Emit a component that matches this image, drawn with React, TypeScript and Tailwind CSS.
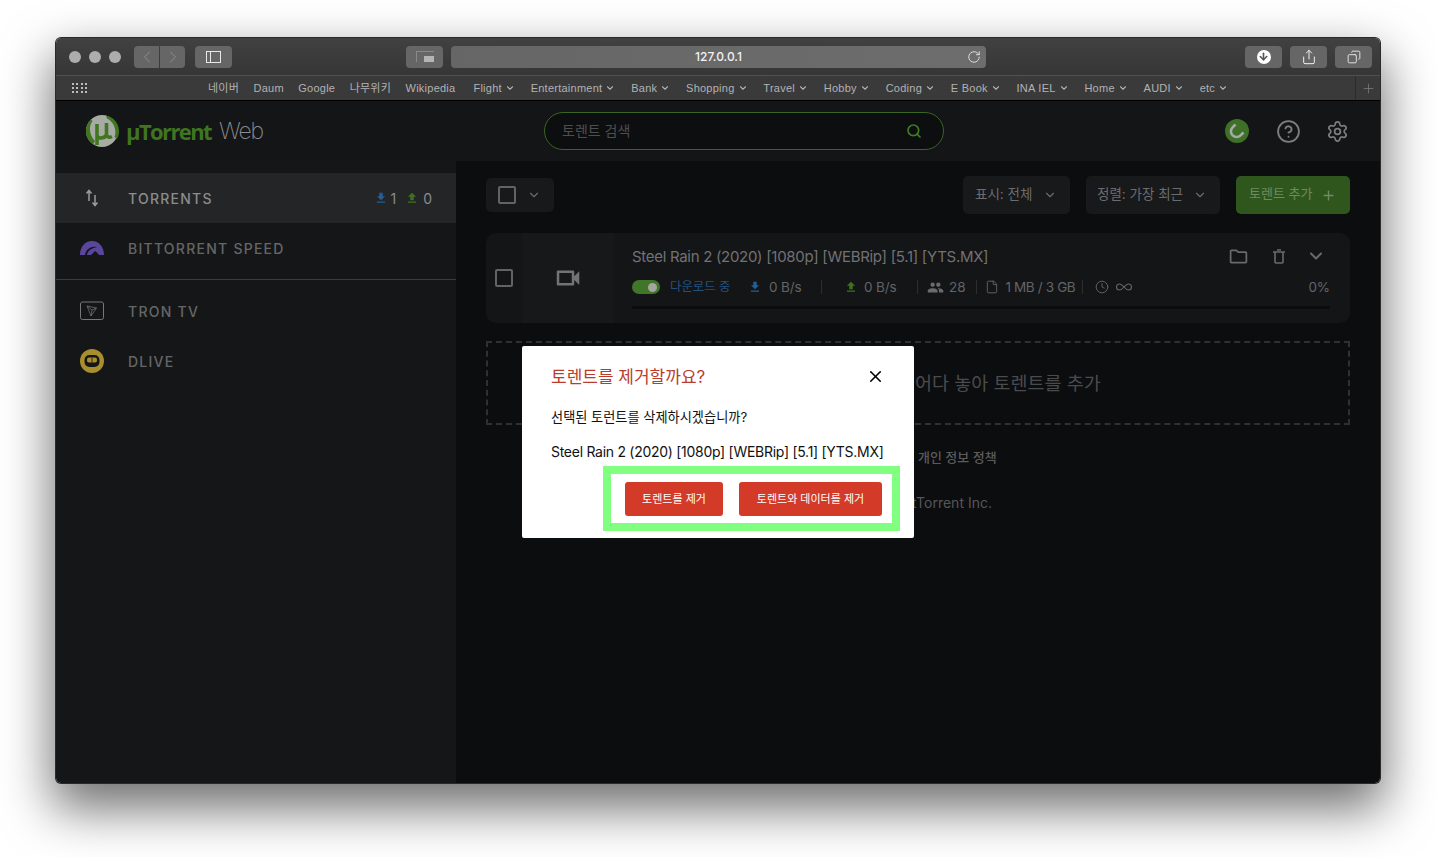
import { ChevronDown, ChevronLeft, ChevronRight, Copy, Plus, RotateCw, Search, Settings, Share, X, Infinity as InfinityIcon, Clock, File, CircleHelp, ArrowDown } from "lucide-react";
import { MdFileDownload, MdFileUpload, MdOutlineFolder, MdOutlineVideocam, MdPeople } from "react-icons/md";

const font = "font-['Inter','Noto_Sans_CJK_KR',sans-serif]";

const links = ["네이버", "Daum", "Google", "나무위키", "Wikipedia"];
const menus = ["Flight", "Entertainment", "Bank", "Shopping", "Travel", "Hobby", "Coding", "E Book", "INA IEL", "Home", "AUDI", "etc"];

function TitleBar() {
  return (
    <div className="flex h-[38px] items-center border-b border-[#505051] bg-gradient-to-b from-[#414142] to-[#363637]">
      <div className="ml-[13px] flex gap-[8px]">
        <span className="size-[12px] rounded-full bg-[#adadad]" />
        <span className="size-[12px] rounded-full bg-[#adadad]" />
        <span className="size-[12px] rounded-full bg-[#adadad]" />
      </div>
      <div className="ml-[13px] flex gap-[1px]">
        <div className="flex h-[22px] w-[25px] items-center justify-center rounded-l-[4px] bg-[#666667] text-[#959595]">
          <ChevronLeft size={20} strokeWidth={1} />
        </div>
        <div className="flex h-[22px] w-[25px] items-center justify-center rounded-r-[4px] bg-[#666667] text-[#959595]">
          <ChevronRight size={20} strokeWidth={1} />
        </div>
      </div>
      <div className="ml-[10px] flex h-[22px] w-[37px] items-center justify-center rounded-[4px] bg-[#666667]">
        <div className="flex h-[12px] w-[15px] border border-[#e8e8e8]">
          <div className="w-[4px] border-r border-[#e8e8e8]" />
        </div>
      </div>
      <div className="ml-[174px] flex h-[22px] w-[37px] items-center justify-center rounded-[4px] bg-[#666667]">
        <div className="flex h-[11px] w-[18px] items-end justify-end border-l border-t border-[#8a8a8a]">
          <div className="h-[6px] w-[10px] bg-[#b4b4b4]" />
        </div>
      </div>
      <div className="relative ml-[8px] flex h-[22px] w-[535px] items-center justify-center rounded-[4px] bg-gradient-to-r from-[#666667] to-[#6d6d6e]">
        <span className={`${font} text-[12px] font-medium text-[#f2f2f2]`}>127.0.0.1</span>
        <RotateCw size={14} strokeWidth={1.5} className="absolute right-[5px] text-[#e8e8e8]" />
      </div>
      <div className="ml-auto mr-[8px] flex gap-[8px]">
        <div className="flex h-[22px] w-[37px] items-center justify-center rounded-[4px] bg-[#666667]">
          <div className="flex size-[14px] items-center justify-center rounded-full bg-white">
            <ArrowDown size={11} strokeWidth={3.5} className="text-[#555]" />
          </div>
        </div>
        <div className="flex h-[22px] w-[37px] items-center justify-center rounded-[4px] bg-[#666667] text-[#f0f0f0]">
          <Share size={16} strokeWidth={1.5} />
        </div>
        <div className="flex h-[22px] w-[37px] items-center justify-center rounded-[4px] bg-[#666667] text-[#f0f0f0]">
          <Copy size={14} strokeWidth={1.5} className="-scale-x-100" />
        </div>
      </div>
    </div>
  );
}

function BookmarksBar() {
  return (
    <div className="flex h-[25px] items-center border-b border-black bg-[#3a3a3b] font-['Liberation_Sans','Noto_Sans_CJK_KR',sans-serif] text-[11px] tracking-[0.25px] text-[#b2b2b2]">
      <div className="ml-[16px] grid w-[15px] grid-cols-4 gap-[2px]">
        {Array.from({ length: 12 }).map((_, i) => (
          <span key={i} className="size-[2px] bg-[#bdbdbd]" />
        ))}
      </div>
      <div className="ml-[121px] flex items-center gap-[14.4px]">
        {links.map((l) => (
          <span key={l}>{l}</span>
        ))}
      </div>
      <div className="ml-[18px] flex items-center gap-[15.8px]">
        {menus.map((m) => (
          <span key={m} className="flex items-center gap-[3px]">
            {m}
            <ChevronDown size={10} strokeWidth={2.6} />
          </span>
        ))}
      </div>
      <div className="ml-auto flex h-full w-[25px] items-center justify-center border-l border-[#2b2b2c] text-[#8c8c8c]">
        <Plus size={15} strokeWidth={1} />
      </div>
    </div>
  );
}

function Logo() {
  return (
    <div className="flex items-center">
      <svg width="34" height="34" viewBox="0 0 34 34">
        <circle cx="17" cy="17" r="16" fill="#a6aba6" />
        <path d="M6 5.5 A16 16 0 0 0 8 30.5 L10 27 C4 21 3.5 12 7.5 7 Z" fill="#41761f" />
        <path d="M21 1.5 A16 16 0 0 1 32 25 L29.5 23 C32 16 29 8 22 4.5 Z" fill="#41761f" />
        <path d="M12 10 V21 C12 25 19 25 21.5 21 M21.5 9 V20 C21.5 23 24 24 27 22.5 M12 20 V31" fill="none" stroke="#41761f" strokeWidth="3.6" />
      </svg>
      <span className="ml-[7px] font-['Open_Sans',sans-serif] text-[22px] font-bold tracking-[-1.6px] text-[#3f7420]">µTorrent</span>
      <span className="ml-[8px] font-['Inter',sans-serif] text-[23px] font-extralight tracking-[-1.2px] text-[#8a8b8c]">Web</span>
    </div>
  );
}

function AppHeader() {
  return (
    <div className="flex h-[60px] items-center bg-[#141517]">
      <div className="ml-[29px] w-[459px]">
        <Logo />
      </div>
      <div className="flex h-[38px] w-[400px] items-center justify-between rounded-full border border-[#3b6423] bg-[#0d0e10] pl-[17px] pr-[21px]">
        <span className={`${font} pb-[2px] text-[14px] text-[#4d4e50]`}>토렌트 검색</span>
        <Search size={16} strokeWidth={2.6} className="text-[#3f7a25]" />
      </div>
      <div className="ml-[281px] flex size-[24px] items-center justify-center rounded-full bg-[#3f7028]">
        <svg width="18" height="18" viewBox="0 0 18 18" fill="none" stroke="#a3aba3" strokeWidth="2.6">
          <path d="M7.5 2.5 L4.6 5.4 A5.6 5.6 0 0 0 12.6 13.4 L15.5 10.5" />
          <path d="M10 5 L13 8" strokeWidth="0" />
        </svg>
      </div>
      <CircleHelp size={25} strokeWidth={1.8} className="ml-[27px] text-[#7c7d7e]" />
      <Settings size={23} strokeWidth={1.8} className="ml-[25px] text-[#7c7d7e]" />
    </div>
  );
}

function SideRow({ icon, label, active, right }: { icon: React.ReactNode; label: string; active?: boolean; right?: React.ReactNode }) {
  return (
    <div className={`flex h-[50px] items-center pr-[24px] ${active ? "bg-[#232527] text-[#8b8c8d]" : "text-[#656667]"}`}>
      <div className="flex w-[72px] justify-center">{icon}</div>
      <span className="font-['Inter',sans-serif] text-[14px] font-medium tracking-[1.25px]">{label}</span>
      {right}
    </div>
  );
}

function Sidebar() {
  return (
    <div className="w-[400px] shrink-0 bg-[#151618] pt-[12px]">
      <SideRow
        active
        label="TORRENTS"
        icon={
          <svg width="14" height="18" viewBox="0 0 14 18" fill="none" stroke="#9a9b9c" strokeWidth="1.5">
            <path d="M4 12 V2 M1.5 4.5 L4 1.5 L6.5 4.5" />
            <path d="M10 6 V16.5 M7.5 13.5 L10 16.5 L12.5 13.5" />
          </svg>
        }
        right={
          <div className="ml-auto flex items-center font-['Inter',sans-serif] text-[14px] text-[#8b8c8d]">
            <MdFileDownload size={14} className="text-[#255e95]" />
            <span className="ml-[2px]">1</span>
            <MdFileUpload size={14} className="ml-[9px] text-[#41701f]" />
            <span className="ml-[4px]">0</span>
          </div>
        }
      />
      <SideRow
        label="BITTORRENT SPEED"
        icon={
          <svg width="24" height="14" viewBox="0 0 24 14">
            <path d="M0 14 C0 6 5 0 12 0 C19 0 24 6 24 14 H19 C18 13 17 11 15 10 L11 14 Z" fill="#5a469c" />
            <path d="M5 14 C6 8 11 5 17 6 C12 7 8 9 7 14 Z" fill="#151618" />
          </svg>
        }
      />
      <div className="mt-[6px] h-px bg-[#3a3b3c]" />
      <div className="mt-[6px]">
        <SideRow
          label="TRON TV"
          icon={
            <svg width="24" height="20" viewBox="0 0 24 20" fill="none" stroke="#77787a" strokeWidth="1">
              <rect x="0.5" y="1" width="23" height="17.5" rx="2" />
              <path d="M7 5 L16.5 7 L11 15 Z M7 5 L12 9 L11 15 M12 9 L16.5 7" strokeWidth="0.7" />
            </svg>
          }
        />
        <SideRow
          label="DLIVE"
          icon={
            <svg width="24" height="24" viewBox="0 0 24 24">
              <circle cx="12" cy="12" r="12" fill="#a88e2d" />
              <rect x="4.5" y="6" width="15" height="12" rx="5" fill="#141517" />
              <rect x="7" y="8.5" width="10" height="5" rx="2" fill="#a88e2d" />
              <rect x="11.6" y="8.5" width="0.8" height="5" fill="#141517" />
            </svg>
          }
        />
      </div>
    </div>
  );
}

function TorrentCard() {
  return (
    <div className="mt-[19px] flex h-[90px] overflow-hidden rounded-[10px] bg-[#141517]">
      <div className="flex w-[36px] items-center justify-center">
        <span className="size-[18px] rounded-[2px] border-2 border-[#626365]" />
      </div>
      <div className="flex w-[92px] items-center justify-center bg-[#17181a]">
        <MdOutlineVideocam size={30} className="text-[#727375]" />
      </div>
      <div className="flex-1 pl-[18px] pr-[20px]">
        <div className="flex h-[45px] items-center justify-between pt-[3px]">
          <span className="text-[15px] tracking-[-0.3px] text-[#717274]">Steel Rain 2 (2020) [1080p] [WEBRip] [5.1] [YTS.MX]</span>
          <div className="mb-[2px] mr-[4px] flex items-center text-[#696a6c]">
            <MdOutlineFolder size={21} />
            <svg width="12" height="15" viewBox="0 0 12 15" fill="none" stroke="currentColor" strokeWidth="1.6" className="ml-[24px]">
              <path d="M0 3 H12 M4 1 H8 M2 3 V13 Q2 14 3 14 H9 Q10 14 10 13 V3" />
            </svg>
            <ChevronDown size={20} strokeWidth={2.4} className="ml-[21px]" />
          </div>
        </div>
        <div className="flex h-[18px] items-center text-[13.5px] tracking-[-0.1px] text-[#636466]">
          <div className="flex h-[14px] w-[28px] items-center justify-end rounded-full bg-[#41752a] pr-[3px]">
            <span className="size-[9px] rounded-full bg-[#a3a5a3]" />
          </div>
          <span className="ml-[10px] w-[59px] whitespace-nowrap text-[12.5px] text-[#22517f]">다운로드 중</span>
          <MdFileDownload size={14} className="ml-[19px] text-[#255e95]" />
          <span className="ml-[7px] w-[52px]">0 B/s</span>
          <span className="h-[14px] w-px bg-[#2c2d2f]" />
          <MdFileUpload size={14} className="ml-[22px] text-[#41701f]" />
          <span className="ml-[6px] w-[53px]">0 B/s</span>
          <span className="h-[14px] w-px bg-[#2c2d2f]" />
          <MdPeople size={17} className="ml-[9px] text-[#6a6b6d]" />
          <span className="ml-[5px]">28</span>
          <span className="ml-[11px] h-[14px] w-px bg-[#2c2d2f]" />
          <File size={14} strokeWidth={1.6} className="ml-[8px]" />
          <span className="ml-[6px] tracking-[-0.35px]">1 MB / 3 GB</span>
          <span className="ml-[7px] h-[14px] w-px bg-[#2c2d2f]" />
          <Clock size={14} strokeWidth={1.6} className="ml-[12px]" />
          <InfinityIcon size={18} strokeWidth={1.5} className="ml-[6px]" />
          <span className="ml-auto">0%</span>
        </div>
        <div className="mt-[10px] h-[3px] bg-[#0b0c0d]" />
      </div>
    </div>
  );
}

function Content() {
  return (
    <div className={`${font} flex-1 bg-[#0c0d0f] px-[30px] pt-[15px]`}>
      <div className="flex h-[38px] items-center">
        <div className="flex h-[34px] w-[68px] items-center gap-[11px] rounded-[5px] bg-[#18191b] pl-[12px] text-[#6a6b6d]">
          <span className="size-[18px] rounded-[2px] border-2 border-[#626365]" />
          <ChevronDown size={14} />
        </div>
        <div className="ml-auto flex h-[38px] w-[107px] items-center justify-between rounded-[5px] bg-[#18191b] pl-[12px] pr-[13px] text-[13.5px] text-[#6b6c6e]">
          <span className="pb-[2px]">표시: 전체</span> <ChevronDown size={14} />
        </div>
        <div className="ml-[16px] flex h-[38px] w-[134px] items-center justify-between rounded-[5px] bg-[#18191b] pl-[11px] pr-[13px] text-[13.5px] text-[#6b6c6e]">
          <span className="pb-[2px]">정렬: 가장 최근</span> <ChevronDown size={14} />
        </div>
        <div className="ml-[16px] flex h-[38px] w-[114px] items-center justify-between rounded-[5px] bg-[#2f571d] pl-[13px] pr-[14px] text-[13px] text-[#6f8a60]">
          <span className="pb-[2px]">토렌트 추가</span> <Plus size={15} strokeWidth={2.2} />
        </div>
      </div>
      <TorrentCard />
      <div className="mt-[18px] flex h-[84px] items-center justify-center border-2 border-dashed border-[#2f3032] pr-[6px] pt-[1px] text-[18.5px] text-[#4a4b4d]">
        여기로 토렌트 파일을 끌어다 놓아 토렌트를 추가
      </div>
      <div className="mt-[23px] pl-[4px] text-center text-[13px] font-medium text-[#5a5b5d]">서비스 약관 | 개인 정보 정책</div>
      <div className="mt-[24px] text-center text-[14px] text-[#55565a]">© 2020 BitTorrent Inc.</div>
    </div>
  );
}

function RemoveModal() {
  return (
    <div className={`${font} absolute left-[466px] top-[308px] h-[192px] w-[392px] rounded-[2px] bg-white pt-[18px]`}>
      <div className="flex h-[24px] items-center justify-between pl-[29px] pr-[29px]">
        <span className="pt-[3px] text-[17px] text-[#b93c2c]">토렌트를 제거할까요?</span>
        <X size={19} strokeWidth={2} className="text-black" />
      </div>
      <p className="mt-[20px] pl-[29px] text-[13.2px] leading-[18px] text-[#111]">선택된 토런트를 삭제하시겠습니까?</p>
      <p className="mt-[17px] pl-[29px] text-[14px] leading-[18px] tracking-[-0.28px] text-[#111]">Steel Rain 2 (2020) [1080p] [WEBRip] [5.1] [YTS.MX]</p>
      <div className="mt-[5px] flex justify-end pr-[14px]">
        <div className="flex gap-[16px] border-8 border-[#80ff80] pb-[7px] pl-[14px] pr-[10px] pt-[8px]">
          <div className="flex h-[34px] w-[98px] items-center justify-center rounded-[3px] bg-[#d43a28] text-[11px] text-white">토렌트를 제거</div>
          <div className="flex h-[34px] w-[143px] items-center justify-center rounded-[3px] bg-[#d43a28] text-[11px] text-white">토렌트와 데이터를 제거</div>
        </div>
      </div>
    </div>
  );
}

export default function App() {
  return (
    <div className="h-[857px] w-[1436px] overflow-hidden bg-white pl-[56px] pt-[38px]">
      <div className="relative flex h-[745px] w-[1324px] flex-col overflow-hidden rounded-[5px] shadow-[0_22px_50px_4px_rgba(0,0,0,0.56)] ring-1 ring-[#2a2a2a]">
        <TitleBar />
        <BookmarksBar />
        <AppHeader />
        <div className="flex flex-1">
          <Sidebar />
          <Content />
        </div>
        <RemoveModal />
      </div>
    </div>
  );
}
